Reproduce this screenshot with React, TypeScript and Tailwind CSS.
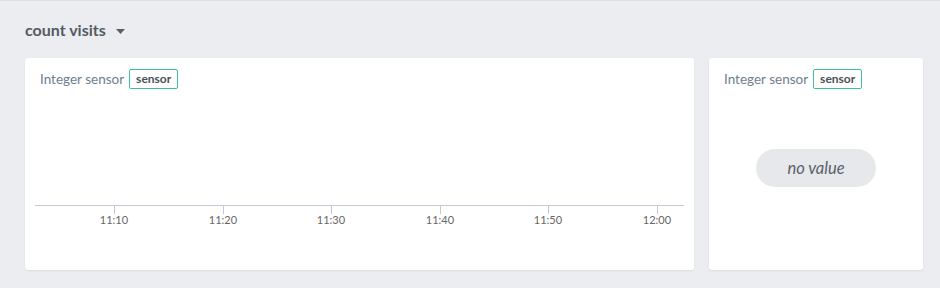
const TICKS = ['11:10', '11:20', '11:30', '11:40', '11:50', '12:00'];
// tick x positions relative to the axis start (axis starts at x=35)
const TICK_X = [79, 188, 296, 405, 513, 622];

function Badge() {
  return (
    <span className="inline-flex h-[20px] items-center rounded-[2px] border border-[#3cc193] px-[6px] text-[12px] font-bold leading-none text-[#4a4f58]">
      sensor
    </span>
  );
}

function CardHeader() {
  return (
    <div className="flex items-center gap-[5px]">
      <span className="text-[13.5px] text-[#6f7d8c]">Integer sensor</span>
      <Badge />
    </div>
  );
}

function ChartCard() {
  return (
    <div className="flex flex-1 flex-col rounded-[3px] bg-white pt-[11px] shadow-[0_1px_2px_rgba(0,0,0,0.08)]">
      <div className="px-[15px]">
        <CardHeader />
      </div>
      <div className="relative mx-[10px] mt-[116px] h-[60px]">
        <div className="h-px bg-[#c3cad6]" />
        {TICKS.map((t, i) => (
          <div key={t} className="absolute top-0 flex w-0 flex-col items-center" style={{ left: TICK_X[i] }}>
            <div className="h-[9px] w-px bg-[#c3cad6]" />
            <span className="mt-[-1px] text-[11px] leading-[14px] text-[#666]">{t}</span>
          </div>
        ))}
      </div>
    </div>
  );
}

function ValueCard() {
  return (
    <div className="flex w-[214px] flex-col rounded-[3px] bg-white pt-[11px] shadow-[0_1px_2px_rgba(0,0,0,0.08)]">
      <div className="px-[15px]">
        <CardHeader />
      </div>
      <div className="mt-[60px] flex justify-center">
        <div className="flex h-[38px] w-[120px] items-center justify-center rounded-full bg-[#e6e8ec] text-[16.5px] italic text-[#595f6a]">
          no value
        </div>
      </div>
    </div>
  );
}

export default function App() {
  return (
    <div className="h-[288px] w-[940px] border-t border-[#dcdfe4] bg-[#ebedf0] font-['Lato',sans-serif]">
      <div className="flex items-center gap-[10px] pl-[25px] pt-[17px]">
        <span className="text-[16px] font-bold text-[#555a61]">count visits</span>
        <svg width="9" height="5" viewBox="0 0 9 5" className="mt-[2px]">
          <path d="M0 0h9L4.5 5z" fill="#5a5f66" />
        </svg>
      </div>
      <div className="mt-[16px] flex h-[212px] gap-[15px] pl-[25px] pr-[17px]">
        <ChartCard />
        <ValueCard />
      </div>
    </div>
  );
}
